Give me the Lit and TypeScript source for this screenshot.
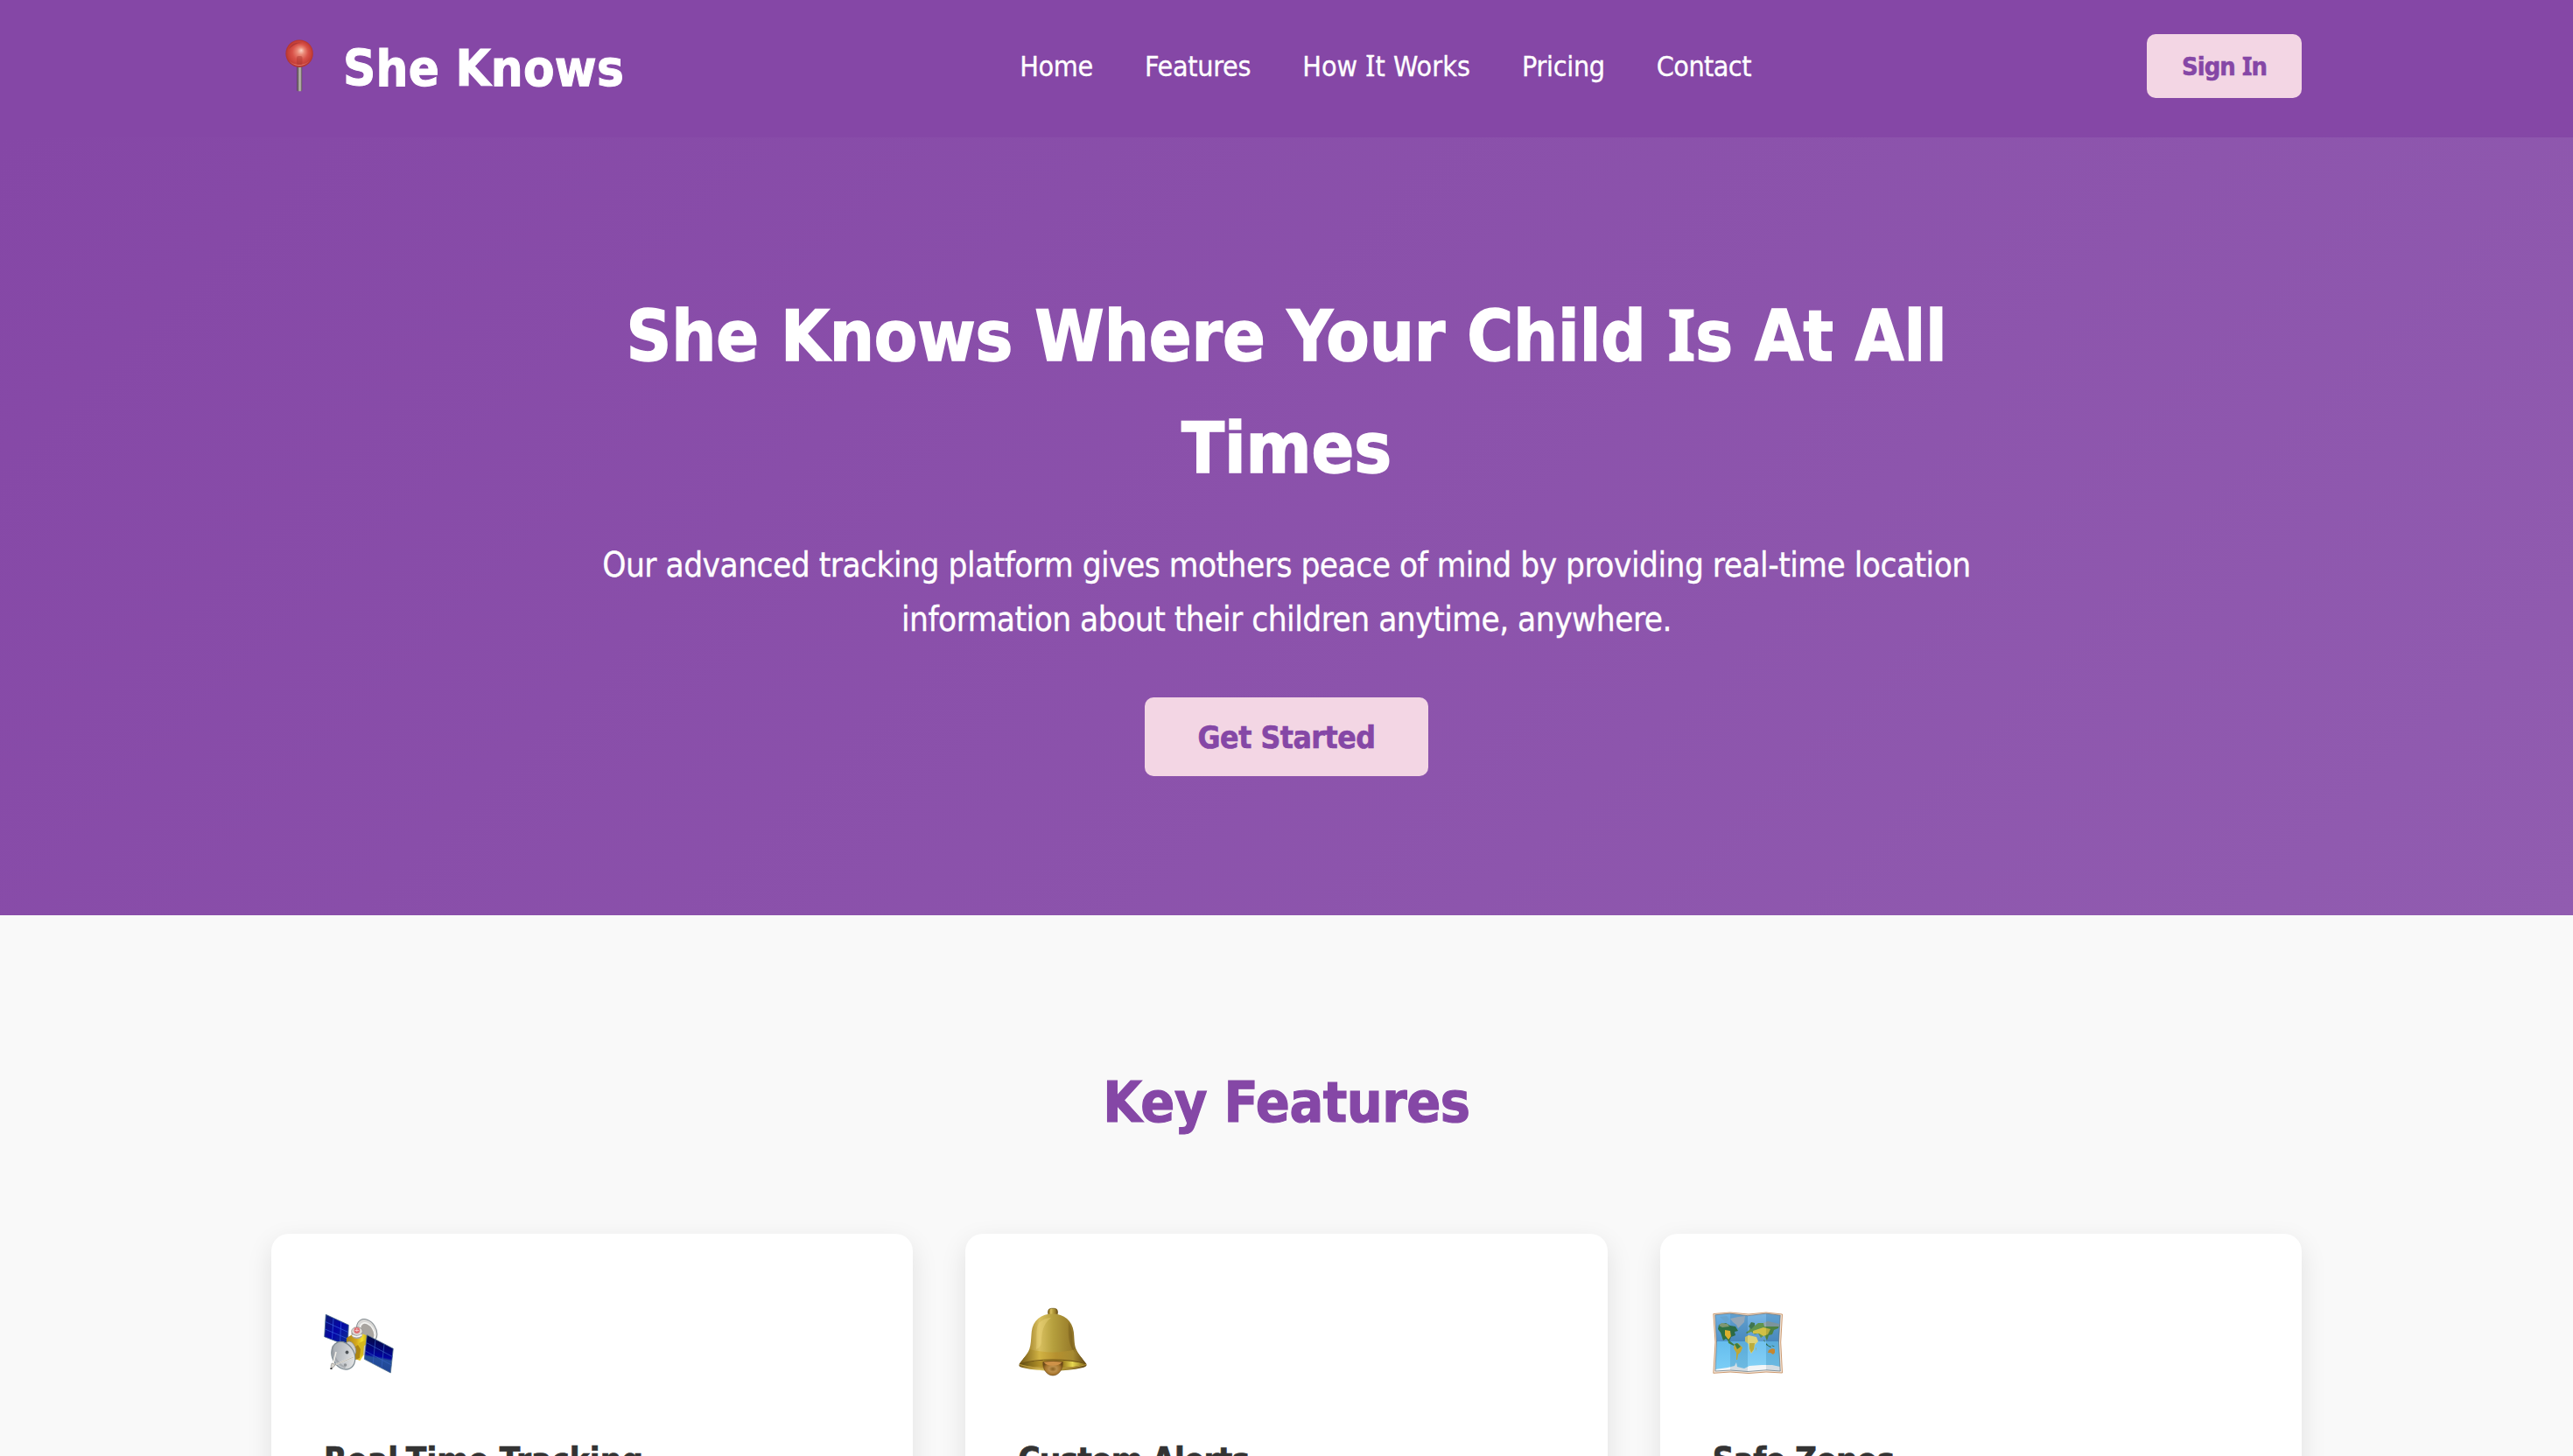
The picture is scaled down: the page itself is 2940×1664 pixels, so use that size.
import { LitElement, html, css } from "lit";
import { customElement } from "lit/decorators.js";

const pinIcon = html`<svg class="pin" viewBox="0 0 64 64" aria-hidden="true">
  <defs>
    <radialGradient id="ball" cx="0.5" cy="0.5" r="0.52" fx="0.57" fy="0.38">
      <stop offset="0" stop-color="#fbd3c4" />
      <stop offset="0.25" stop-color="#ea8a78" />
      <stop offset="0.55" stop-color="#d9534a" />
      <stop offset="0.85" stop-color="#c43d36" />
      <stop offset="1" stop-color="#a8302f" />
    </radialGradient>
    <linearGradient id="stem" x1="0" x2="1" y1="0" y2="0">
      <stop offset="0" stop-color="#51414a" />
      <stop offset="0.35" stop-color="#8c8684" />
      <stop offset="0.6" stop-color="#c9c5b8" />
      <stop offset="1" stop-color="#564a50" />
    </linearGradient>
    <linearGradient id="glow" x1="0" x2="0" y1="0" y2="1">
      <stop offset="0" stop-color="#e8796f" stop-opacity="0" />
      <stop offset="1" stop-color="#e98c80" stop-opacity="0.8" />
    </linearGradient>
  </defs>
  <rect x="29.2" y="30" width="6" height="30.300" rx="1.5" fill="url(#stem)" />
  <circle cx="32.1" cy="17.2" r="15.7" fill="url(#ball)" />
  <path d="M19 23a14.5 14.5 0 0 0 26 0c-3 5-8 7-13 7s-10-2-13-7z" fill="url(#glow)" />
  <rect x="29" y="20" width="6.5" height="10" rx="2" fill="#a8352f" opacity="0.45" />
  <path d="M20 12c3-6 9-9 15-7-6 0-10 3-15 7z" fill="#84242a" opacity="0.4" />
</svg>`;

const satelliteIcon = html`<svg class="icon" viewBox="0 0 80 80" aria-hidden="true">
  <defs>
    <linearGradient id="panelA" x1="0" x2="1" y1="0" y2="1">
      <stop offset="0" stop-color="#101e70" />
      <stop offset="0.5" stop-color="#0405a8" />
      <stop offset="1" stop-color="#123a8c" />
    </linearGradient>
    <linearGradient id="panelB" x1="0.15" x2="0" y1="0" y2="1">
      <stop offset="0" stop-color="#050a3c" />
      <stop offset="0.5" stop-color="#0204a0" />
      <stop offset="0.56" stop-color="#24509c" />
      <stop offset="1" stop-color="#1d3f94" />
    </linearGradient>
    <linearGradient id="dish" x1="0" x2="1" y1="0" y2="1">
      <stop offset="0" stop-color="#9aa0a6" />
      <stop offset="0.5" stop-color="#c3c7cb" />
      <stop offset="1" stop-color="#f0f0ee" />
    </linearGradient>
    <linearGradient id="gold" x1="0" x2="1" y1="0" y2="0">
      <stop offset="0" stop-color="#a88416" />
      <stop offset="0.45" stop-color="#d5a81c" />
      <stop offset="0.7" stop-color="#f4df2a" />
      <stop offset="1" stop-color="#b5951a" />
    </linearGradient>
  </defs>
  <ellipse cx="49.2" cy="27" rx="10.5" ry="14.3" transform="rotate(-32 49.2 27)" fill="#d9d8d6" stroke="#858d92" stroke-width="1" />
  <ellipse cx="49.8" cy="28" rx="7.2" ry="11" transform="rotate(-32 49.8 28)" fill="#a9a5a0" stroke="#f3f3f1" stroke-width="1.8" />
  <path d="M2.300 8.300 28.300 20.300 27.300 44 .7 33.700z" fill="url(#panelA)" stroke="#486a8a" stroke-width="0.8" />
  <path d="M11 12.500l-1.500 24M19.800 16.500l-1.300 23.500M1.800 16.500l26 12M1.300 25l26 11" stroke="#335fe0" stroke-width="0.7" />
  <path d="M26 35l12-7 13 5 .5 12-10 16-6-2-10-9z" fill="url(#gold)" />
  <path d="M40 41l11-5v9l-9 13z" fill="#d6b71d" />
  <path d="M32 48l7-5 3 5-1 10-5 2-6-4z" fill="#ad850f" />
  <ellipse cx="31" cy="47" rx="5" ry="8.5" transform="rotate(-25 31 47)" fill="#cfcfcb" stroke="#8c8c88" stroke-width="0.8" />
  <path d="M31.500 29c0 4.500 1.500 7 6.500 7s6.500-2.500 6.500-7z" fill="#a7a29b" />
  <ellipse cx="38" cy="27.500" rx="6.300" ry="4.800" fill="#dedad6" stroke="#8f8a86" stroke-width="0.8" />
  <circle cx="37.800" cy="26.500" r="3.400" fill="#df6f74" />
  <path d="M37.800 24v4M35.500 26.500h4.600" stroke="#f6dcdc" stroke-width="0.7" />
  <path d="M32.500 32q5 3.500 11-.5" fill="none" stroke="#f7f6f4" stroke-width="1.6" />
  <path d="M46 44l4-2v12l-5 1z" fill="#c9c6bd" />
  <path d="M49.300 31.700 79.300 47.300 76.300 75 46.300 59.300z" fill="url(#panelB)" stroke="#53718c" stroke-width="0.8" />
  <path d="M59 37l-2.800 27.500M69 42l-3 27.500M48.500 40.500l30 16M47.300 50l30 16" stroke="#3560c0" stroke-width="0.7" />
  <ellipse cx="22.300" cy="55.300" rx="12.600" ry="16.500" transform="rotate(-27 22.300 55.300)" fill="url(#dish)" stroke="#7e8b92" stroke-width="1.2" />
  <path d="M10.500 44c-2 7 3 20 14 25" fill="none" stroke="#8d9298" stroke-width="2" opacity="0.5" />
  <circle cx="26.500" cy="51.500" r="1.900" fill="#4e5357" />
  <circle cx="24.500" cy="66" r="1.800" fill="#8f9396" />
  <path d="M10 67 14 51M10 67l24-10" stroke="#f0eee8" stroke-width="1.500" fill="none" />
  <path d="M10 67l24-10" stroke="#8b8880" stroke-width="0.500" />
  <path d="M9 64l4.500 1.500-3 3.500-2.500-1z" fill="#d8d6d0" stroke="#84827d" stroke-width="0.6" />
  <path d="M8.500 69v2" stroke="#444" stroke-width="2.200" />
</svg>`;

const bellIcon = html`<svg class="icon" viewBox="0 0 80 80" aria-hidden="true">
  <defs>
    <linearGradient id="brass" x1="0" x2="1" y1="0" y2="0">
      <stop offset="0" stop-color="#6d5317" />
      <stop offset="0.14" stop-color="#a5862e" />
      <stop offset="0.3" stop-color="#d9c060" />
      <stop offset="0.5" stop-color="#b6a03e" />
      <stop offset="0.75" stop-color="#9b7f2c" />
      <stop offset="1" stop-color="#604614" />
    </linearGradient>
    <linearGradient id="skirt" x1="0" x2="1" y1="0" y2="0">
      <stop offset="0" stop-color="#705515" />
      <stop offset="0.3" stop-color="#d2b343" />
      <stop offset="0.55" stop-color="#b5902f" />
      <stop offset="0.8" stop-color="#a68a31" />
      <stop offset="1" stop-color="#5f4514" />
    </linearGradient>
    <linearGradient id="mouth" x1="0" x2="1" y1="0" y2="0">
      <stop offset="0" stop-color="#5e4b12" />
      <stop offset="0.3" stop-color="#b08f28" />
      <stop offset="0.65" stop-color="#9c7d1e" />
      <stop offset="0.8" stop-color="#e8d850" />
      <stop offset="1" stop-color="#806515" />
    </linearGradient>
    <radialGradient id="clapper" cx="0.5" cy="0.55" r="0.55">
      <stop offset="0" stop-color="#8a6120" />
      <stop offset="0.35" stop-color="#bd8f4a" />
      <stop offset="0.7" stop-color="#a5742c" />
      <stop offset="1" stop-color="#6a4818" />
    </radialGradient>
  </defs>
  <rect x="34.500" y="1.300" width="11" height="9" rx="4" fill="url(#brass)" stroke="#6d5418" stroke-width="0.700" />
  <path d="M39.800 7.500c13 0 22.500 8 24 20.500 1 9 .5 15 3 20.500 2 5 7 10 11.500 16.500 1 2.300-1 3.300-4 4-22 5-47 5-69 0-3-.7-4.800-1.800-3.500-4C6 58.500 11 54 13.200 48c2-6 1.800-12 2.600-20.300C17 15 27 7.500 39.800 7.500z" fill="url(#brass)" />
  <path d="M13.500 48c17 4.500 36 4.500 53 0 2.500 6 7.500 10.500 12 17C60 60 20 60 1.500 65 6 58.500 11.500 54 13.500 48z" fill="url(#skirt)" />
  <path d="M2.500 64.500c20-5 55-5 75 0-7 6-68 6-75 0z" fill="url(#mouth)" />
  <path d="M2 64.800c20-6.500 56-6.500 76 0" fill="none" stroke="#6f5315" stroke-width="1" />
  <path d="M2 65.500c20 6 56 6 76 0" fill="none" stroke="#b9983a" stroke-width="1.300" />
  <path d="M24 18c4-4 9-6 14-6-7 5-11 14-11 27 0 5-3 8-6 9 1-11-1-24 3-30z" fill="#f3dd85" opacity="0.35" />
  <path d="M58 17c5 9 4 20 5 29l3 6c-6-6-9-12-8-35z" fill="#58420f" opacity="0.28" />
  <path d="M28.800 62.500c6-1.200 17-1.200 22.500 0 .6 8-4.500 15.500-11.300 15.500s-12-7.500-11.200-15.500z" fill="url(#clapper)" stroke="#6d4a18" stroke-width="0.6" />
  <path d="M29.500 62.800q10.500-1.500 21 0-3 4-10.500 4t-10.500-4z" fill="#cf9248" />
</svg>`;

const mapIcon = html`<svg class="icon" viewBox="0 0 80 80" aria-hidden="true">
  <defs>
    <linearGradient id="seaTop" x1="0" x2="0" y1="0" y2="1">
      <stop offset="0" stop-color="#74b6e6" />
      <stop offset="1" stop-color="#4f93cb" />
    </linearGradient>
    <linearGradient id="seaLow" x1="0" x2="0" y1="0" y2="1">
      <stop offset="0" stop-color="#65bdee" />
      <stop offset="1" stop-color="#80d2f8" />
    </linearGradient>
    <clipPath id="sheet"><path d="M2.800 8.800 20 7.200l20 2.500L61 7.200l16.200 2L75.500 40l1.700 33L61 71.800 40 73.500l-20-1.500L3 73 4.500 40z" /></clipPath>
  </defs>
  <path d="M.8 7.500 20 6l21 2L61 6l18.500 2-1.800 32 1.800 35L61 74l-20 1.500-21-1.500L.8 75.300 3 40z" fill="#f3e6da" stroke="#cc9a70" stroke-width="1" />
  <g clip-path="url(#sheet)">
    <path d="M0 0h80v40H0z" fill="url(#seaTop)" />
    <path d="M0 39h80v41H0z" fill="url(#seaLow)" />
    <path d="M7 20l8-2 5 3 6 1 3 5-4 1 1 4-5 2-2 5-4-3-3 2-3-9-3-4z" fill="#2f7142" />
    <path d="M7 21l3-3 7 1 2 3-8 1z" fill="#7f9670" />
    <path d="M14 26l6 1 1 6-3 4-4-5z" fill="#dbb02f" />
    <path d="M17 36l3 3 5 4-1 1-6-3z" fill="#43803a" />
    <path d="M20 13l9-2 8-1-1 7-4 4-3 3-2-4-4-3z" fill="#a7b7c6" />
    <path d="M8 11l8-1 3 4-4 3z" fill="#68a4cf" />
    <path d="M25 42l4-1 5 5-2 5-3 3-1 6-1 0 0-8-3-5z" fill="#d9b730" />
    <path d="M25 42l3-1 4 4-4 3z" fill="#3d873f" />
    <path d="M38 29l4-3 1-4 5-1 4-3 9 0 9 1 6 1-1 4-5 2-2 5-4 1-2 6-3-6-4 3-3-5-4 1-4-3-5 2z" fill="#548b3e" />
    <path d="M46 27l12-4 8 2-3 6-5 2-5-3-7 0z" fill="#cdbb36" />
    <path d="M41 22l3-5 4 1 0 3-4 4z" fill="#2f6a42" />
    <path d="M58 18l5-2 13 3 1 3-18 0z" fill="#8ca1a5" />
    <path d="M37 34l4-2 9 2 2 5-4 4-1 6-3 4-2-4-1-7-4-3z" fill="#dcd06c" />
    <path d="M42 41l6 0-1 7-3 4-2-5z" fill="#b5a72d" />
    <path d="M49 47l1-1-1 4z" fill="#b5a72d" />
    <path d="M59 37l1 3-2-2zM61 41l3 3 3 1-1 1-5-3zM67 43l4 2-2 0z" fill="#317146" />
    <path d="M64 49l4-2 3 1 0 4-2 2-3-2-3 0z" fill="#e0922a" />
    <path d="M3 71l14-2 8-2 2-4 1 5 8 2 6-3 14-1 12 0 9 2 1 8H3z" fill="#f1f5f7" />
    <path d="M20 0h20v80H20zM61 0h19v80H61z" fill="#173b5f" opacity="0.13" />
    <path d="M40 0h21v80H40z" fill="#fff" opacity="0.08" />
  </g>
  <path d="M2.800 8.800 20 7.200l20 2.500L61 7.200l16.200 2L75.500 40l1.700 33L61 71.800 40 73.500l-20-1.500L3 73 4.500 40z" fill="none" stroke="#58636b" stroke-width="0.600" />
</svg>`;

const navItems = [
  { label: html`Home`, style: "" },
  { label: html`Features`, style: "" },
  { label: html`How <span class="cap-i">I</span>t Works`, style: "loose" },
  { label: html`Pricing`, style: "" },
  { label: html`Contact`, style: "tight" },
];

const features = [
  { icon: satelliteIcon, title: "Real-Time Tracking", tight: false },
  { icon: bellIcon, title: "Custom Alerts", tight: true },
  { icon: mapIcon, title: "Safe Zones", tight: true },
];

@customElement("app-root")
export class AppRoot extends LitElement {
  static styles = css`
    :host {
      display: block;
      height: 1664px;
      overflow: hidden;
      background: #f9f9f9;
      color: #333;
      font-family: "DejaVu Sans Condensed", "DejaVu Sans", sans-serif;
      font-size: 32px;
      line-height: 1.6;
      font-kerning: normal;
      -webkit-text-stroke: 0.3px currentColor;
    }
    * {
      box-sizing: border-box;
    }
    h1, h2, h3, p {
      margin: 0;
    }
    h1, h2, h3, .name, button {
      -webkit-text-stroke: 0.018em currentColor;
    }
    .cap-i {
      font-family: "Noto Sans", sans-serif;
      font-size: 1.02em;
      line-height: 1;
    }
    header {
      height: 157px;
      padding: 0 310px 6px;
      display: flex;
      align-items: center;
      justify-content: space-between;
      background: #8547a6;
      color: #fff;
    }
    .brand {
      display: flex;
      align-items: center;
    }
    .pin {
      width: 64px;
      height: 64px;
      margin: 1px 18px 0 0;
      display: block;
    }
    .name {
      font-size: 57.6px;
      font-weight: 700;
      letter-spacing: 0.25px;
      line-height: 92px;
      padding-top: 6px;
      white-space: nowrap;
    }
    nav {
      display: flex;
      gap: 59px;
      padding-top: 3px;
      letter-spacing: -0.3px;
      white-space: nowrap;
    }
    nav .loose {
      letter-spacing: 0.05px;
    }
    nav .tight {
      letter-spacing: -0.57px;
    }
    button {
      font-family: inherit;
      font-weight: 700;
      border: 0;
      border-radius: 10px;
      background: #f3d6e4;
      color: #8547a6;
      line-height: 1.2;
      white-space: nowrap;
    }
    .signin {
      width: 177px;
      height: 73px;
      padding: 2px 0 0;
      font-size: 28.8px;
      letter-spacing: -0.95px;
    }
    .hero {
      height: 889px;
      padding-top: 164px;
      display: flex;
      flex-direction: column;
      align-items: center;
      text-align: center;
      color: #fff;
      background: linear-gradient(135deg, #8547a6, #915cb0);
    }
    h1 {
      font-size: 80px;
      line-height: 128px;
      letter-spacing: -0.09px;
    }
    .lead {
      margin: 38px 0 59px;
      font-size: 38.4px;
      line-height: 61.5px;
      letter-spacing: -0.5px;
    }
    .start {
      width: 324px;
      height: 90px;
      padding: 3px 0 0;
      font-size: 35.2px;
      letter-spacing: -0.45px;
    }
    .features {
      padding: 163px 310px 0;
    }
    h2 {
      font-size: 64px;
      line-height: 102px;
      letter-spacing: -0.48px;
      text-align: center;
      color: #8547a6;
      margin-bottom: 99px;
    }
    .grid {
      display: grid;
      grid-template-columns: repeat(3, 1fr);
      gap: 60px;
    }
    .card {
      height: 440px;
      padding: 84px 60px 60px;
      border-radius: 20px;
      background: #fff;
      box-shadow: 0 10px 30px rgba(0, 0, 0, 0.1);
    }
    .icon {
      width: 80px;
      height: 80px;
      display: block;
      margin-bottom: 64px;
    }
    h3 {
      font-size: 38.4px;
      line-height: 61.4px;
      letter-spacing: 0;
      white-space: nowrap;
    }
    h3.tight {
      letter-spacing: -0.85px;
    }
  `;

  render() {
    return html`
      <header>
        <div class="brand">${pinIcon}<span class="name">She Knows</span></div>
        <nav>${navItems.map((item) => html`<a class=${item.style}>${item.label}</a>`)}</nav>
        <button class="signin">Sign <span class="cap-i">I</span>n</button>
      </header>
      <section class="hero">
        <h1>She Knows Where Your Child <span class="cap-i">I</span>s At All<br />Times</h1>
        <p class="lead">
          Our advanced tracking platform gives mothers peace of mind by providing real-time location<br />information
          about their children anytime, anywhere.
        </p>
        <button class="start">Get Started</button>
      </section>
      <section class="features">
        <h2>Key Features</h2>
        <div class="grid">
          ${features.map(
            (f) => html`<article class="card">
              ${f.icon}
              <h3 class=${f.tight ? "tight" : ""}>${f.title}</h3>
            </article>`
          )}
        </div>
      </section>
    `;
  }
}
